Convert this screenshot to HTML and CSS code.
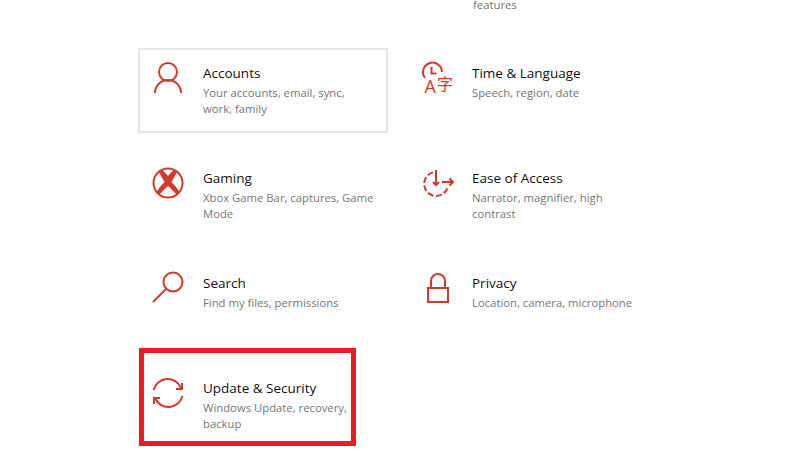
FILE: index.html
```html
<!DOCTYPE html>
<html lang="en">
<head>
<meta charset="UTF-8" />
<meta name="viewport" content="width=device-width, initial-scale=1" />
<title>Windows Settings</title>
<link rel="stylesheet" href="styles.css">
</head>
<body>
  <section class="settings" aria-label="Windows Settings">
    <div class="cut-row">features</div>

    <a class="tile tile-selected" href="#">
      <svg class="icon" viewBox="0 0 32 32" aria-hidden="true">
        <circle cx="16" cy="10" r="9" />
        <path d="M3 31a13 13 0 0 1 26 0" />
      </svg>
      <div class="tile-text">
        <h2>Accounts</h2>
        <p>Your accounts, email, sync,<br>work, family</p>
      </div>
    </a>

    <a class="tile" href="#">
      <svg class="icon" viewBox="0 0 32 32" aria-hidden="true">
        <path d="M4 16A9.500 9.500 0 1 1 21 10" />
        <path d="M10.500 5v6.500h5" />
        <text class="glyph" x="3.500" y="31">A</text>
        <text class="glyph glyph-cjk" x="16" y="27.500">字</text>
      </svg>
      <div class="tile-text">
        <h2>Time &amp; Language</h2>
        <p>Speech, region, date</p>
      </div>
    </a>

    <a class="tile" href="#">
      <svg class="icon" viewBox="0 0 32 32" aria-hidden="true">
        <circle cx="16" cy="16" r="14.500" />
        <path class="fill" d="M7 5L10 3C12 4 14 6.500 16 9C18 6.500 20 4 22 3L25 5C23.500 8 21.500 11.500 19.500 15C22.500 18 26 22 27.500 25.500L25 28C22 24.500 19 21.500 16 19C13 21.500 10 24.500 7 28L4.500 25.500C6 22 9.500 18 12.500 15C10.500 11.500 8.500 8 7 5Z" />
      </svg>
      <div class="tile-text">
        <h2>Gaming</h2>
        <p>Xbox Game Bar, captures, Game<br>Mode</p>
      </div>
    </a>

    <a class="tile" href="#">
      <svg class="icon" viewBox="0 0 32 32" aria-hidden="true">
        <path class="dashed" d="M12 5.400A12 12 0 1 0 27 19" />
        <path d="M15 3v15M12 15l3 3 3-3M21 15h11M28.500 11.500l3.500 3.500-3.500 3.500" />
      </svg>
      <div class="tile-text">
        <h2>Ease of Access</h2>
        <p>Narrator, magnifier, high<br>contrast</p>
      </div>
    </a>

    <a class="tile" href="#">
      <svg class="icon" viewBox="0 0 32 32" aria-hidden="true">
        <circle cx="21" cy="10" r="9.500" />
        <path d="M1 30l13-13" />
      </svg>
      <div class="tile-text">
        <h2>Search</h2>
        <p>Find my files, permissions</p>
      </div>
    </a>

    <a class="tile" href="#">
      <svg class="icon" viewBox="0 0 32 32" aria-hidden="true">
        <rect x="7" y="16" width="20" height="14" />
        <path d="M10 16V9a7 7 0 0 1 14 0v7" />
      </svg>
      <div class="tile-text">
        <h2>Privacy</h2>
        <p>Location, camera, microphone</p>
      </div>
    </a>

    <a class="tile" href="#">
      <svg class="icon" viewBox="0 0 32 32" aria-hidden="true">
        <path d="M1.500 13A14.500 14.500 0 0 1 29 11M30 6v6h-6" />
        <path d="M30.500 19A14.500 14.500 0 0 1 3 21M2 27v-6h6" />
      </svg>
      <div class="tile-text">
        <h2>Update &amp; Security</h2>
        <p>Windows Update, recovery,<br>backup</p>
      </div>
      <span class="callout"></span>
    </a>
  </section>
</body>
</html>
```

FILE: styles.css
```css
:root {
  --accent: #d13b2b;
  --title: #111;
  --muted: #767676;
}
* {
  box-sizing: border-box;
}
html,
body {
  height: 100%;
}
body {
  margin: 0;
  background: #fff;
  overflow: hidden;
  font-family: "Open Sans", sans-serif;
}
.settings {
  display: grid;
  grid-template-columns: 250px 250px;
  column-gap: 19px;
  row-gap: 20px;
  padding-left: 138px;
}
.cut-row {
  grid-column: 2;
  height: 28px;
  padding-left: 66px;
  font-size: 11.300px;
  line-height: 9px;
  color: var(--muted);
}
.tile {
  position: relative;
  display: flex;
  gap: 19px;
  height: 85px;
  padding: 12px;
  border: 2px solid transparent;
  color: inherit;
  text-decoration: none;
}
.tile-selected {
  border-color: #e6e6e6;
}
.icon {
  flex: none;
  width: 32px;
  height: 32px;
  overflow: visible;
  fill: none;
  stroke: var(--accent);
  stroke-width: 2;
}
.icon .fill {
  fill: var(--accent);
  stroke: none;
}
.icon .dashed {
  stroke-dasharray: 6 2.500;
}
.icon .glyph {
  fill: var(--accent);
  stroke: none;
  font-family: "Open Sans", sans-serif;
  font-size: 18px;
}
.icon .glyph-cjk {
  font-family: "Noto Sans CJK SC", sans-serif;
  font-size: 16px;
}
.tile-text {
  padding-top: 1px;
  white-space: nowrap;
}
h2 {
  margin: 0 0 2px;
  font-size: 13.500px;
  font-weight: 400;
  line-height: 20px;
  color: var(--title);
}
p {
  margin: 0;
  font-size: 11.300px;
  line-height: 16px;
  color: var(--muted);
}
.callout {
  position: absolute;
  left: -1px;
  top: -17px;
  width: 217px;
  height: 98px;
  border: 5px solid #ed1c24;
}
```
